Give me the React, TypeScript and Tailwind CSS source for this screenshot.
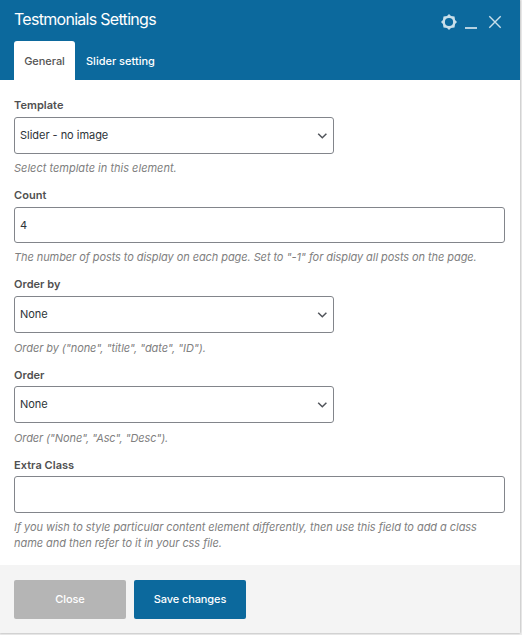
import React from "react";

type FieldProps = {
  label: string;
  hint: string;
  className: string;
  hintClass: string;
  children: React.ReactNode;
};

function Field({ label, hint, className, hintClass, children }: FieldProps) {
  return (
    <div className={`flex flex-col ${className}`}>
      <label className="h-4 text-[11px] font-semibold leading-4 tracking-[0.04px] text-[#505050]">{label}</label>
      {children}
      <p className={`text-[11px] italic leading-4 text-[#808080] ${hintClass}`}>{hint}</p>
    </div>
  );
}

function Select({ value, className }: { value: string; className: string }) {
  return (
    <div
      className={`flex w-80 items-center justify-between rounded-[3px] border border-[#82858b] bg-white pl-[5px] pr-[5px] text-[11px] tracking-[-0.03px] text-[#2c3338] ${className}`}
    >
      <span>{value}</span>
      <svg width="11" height="6" viewBox="0 0 11 6" fill="none" stroke="#50545a" strokeWidth="1.5" className="mt-px">
        <path d="M1.2 0.8 5.3 4.8 9.4 0.8" />
      </svg>
    </div>
  );
}

function Input({ value, className }: { value: string; className: string }) {
  return (
    <div
      className={`flex w-[491px] items-center rounded-[3px] border border-[#82858b] bg-white pl-[5px] text-[11px] text-[#2c3338] ${className}`}
    >
      {value}
    </div>
  );
}

export default function App() {
  return (
    <div className="h-[635px] w-[522px] overflow-hidden bg-[#ececec] font-['Inter',sans-serif]">
      <div className="flex h-[633px] w-[520px] flex-col bg-white shadow-[0_0_2px_rgba(0,0,0,0.35)]">
        <header className="flex h-20 flex-col justify-between bg-[#0c699d]">
          <div className="flex h-10 items-center justify-between pl-3.5 pr-[18px]">
            <h1 className="-mt-0.5 text-[16px] leading-5 tracking-[-0.71px] text-white">Testmonials Settings</h1>
            <div className="mt-1 flex items-center">
              <svg width="17" height="16" viewBox="0 0 17 16" fill="#c9dfea">
                <path
                  fillRule="evenodd"
                  d="M8 0 10 1.9 13.5 2.5 14.1 6 16 8 14.1 10 13.5 13.5 10 14.1 8 16 6 14.1 2.5 13.5 1.9 10 0 8 1.9 6 2.5 2.5 6 1.9ZM8 3.9A4.1 4.1 0 1 0 8 12.1 4.1 4.1 0 0 0 8 3.9Z"
                />
              </svg>
              <span className="ml-[7px] mt-3 h-0.5 w-3 bg-[#b5d1e0]" />
              <svg width="14" height="14" viewBox="0 0 14 14" fill="none" stroke="#c9dfea" strokeWidth="1.4" className="ml-[11px]">
                <path d="M1.3 1.3 12.7 12.7M12.7 1.3 1.3 12.7" />
              </svg>
            </div>
          </div>
          <nav className="flex h-[39px] pl-3.5 text-[11px] font-medium leading-4">
            <div className="flex w-[61px] items-center justify-center rounded-t-[3px] bg-white tracking-[-0.05px] text-[#555]">General</div>
            <div className="flex items-center pl-[11px] text-white">Slider setting</div>
          </nav>
        </header>
        <main className="h-[485px] px-3.5 pt-[17px]">
          <Field label="Template" hint="Select template in this element." className="h-[90px]" hintClass="mt-1.5 tracking-[0.01px]">
            <Select value="Slider - no image" className="mt-1 h-[37px]" />
          </Field>
          <Field
            label="Count"
            hint={'The number of posts to display on each page. Set to "-1" for display all posts on the page.'}
            className="h-[89px]"
            hintClass="mt-1.5 tracking-[-0.075px]"
          >
            <Input value="4" className="mt-1 h-9" />
          </Field>
          <Field label="Order by" hint={'Order by ("none", "title", "date", "ID").'} className="h-[91px]" hintClass="mt-[7px] tracking-[-0.08px]">
            <Select value="None" className="mt-1 h-[37px]" />
          </Field>
          <Field label="Order" hint={'Order ("None", "Asc", "Desc").'} className="h-[90px]" hintClass="mt-[7px] tracking-[-0.12px]">
            <Select value="None" className="mt-[3px] h-[37px]" />
          </Field>
          <Field
            label="Extra Class"
            hint="If you wish to style particular content element differently, then use this field to add a class name and then refer to it in your css file."
            className="h-[95px]"
            hintClass="mt-1.5 tracking-[-0.055px]"
          >
            <Input value="" className="mt-[3px] h-[37px]" />
          </Field>
        </main>
        <footer className="flex h-[68px] gap-2 bg-[#f4f4f4] px-3.5 pt-[15px] text-[11px] font-medium tracking-[-0.11px] text-white">
          <button className="h-[39px] w-28 rounded-[2px] bg-[#b5b5b5]">Close</button>
          <button className="h-[39px] w-28 rounded-[2px] bg-[#0c699d]">Save changes</button>
        </footer>
      </div>
    </div>
  );
}
